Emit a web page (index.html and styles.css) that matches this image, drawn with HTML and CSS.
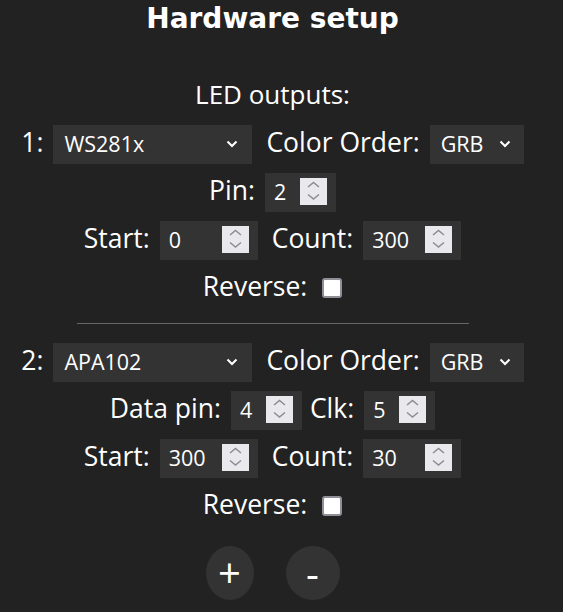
FILE: index.html
```html
<!DOCTYPE html>
<html>
<head>
<meta charset="utf-8">
<title>Hardware setup</title>
<link rel="stylesheet" href="styles.css">
</head>
<body>
<div class="page">
  <h2 class="title">Hardware setup</h2>
  <div class="subhead">LED outputs:</div>

  <div class="row">
    <span class="lbl">1:</span>
    <div class="select select-type"><span>WS281x</span><svg class="chev" width="12" height="8" viewBox="0 0 12 8"><path d="M1.5 1.5 L6 6 L10.5 1.5" fill="none" stroke="#fff" stroke-width="2"/></svg></div>
    <span class="lbl group">Color Order:</span>
    <div class="select select-order"><span>GRB</span><svg class="chev" width="12" height="8" viewBox="0 0 12 8"><path d="M1.5 1.5 L6 6 L10.5 1.5" fill="none" stroke="#fff" stroke-width="2"/></svg></div>
  </div>
  <div class="row">
    <span class="lbl">Pin:</span>
    <div class="num num-short"><span>2</span><svg class="spin" width="27" height="27" viewBox="0 0 27 27"><rect width="27" height="27" fill="#e9e9ed"/><path d="M8 9 L13.5 4.5 L19 9 M8 16.5 L13.5 21 L19 16.5" fill="none" stroke="#8c8c92" stroke-width="1.5"/></svg></div>
  </div>
  <div class="row">
    <span class="lbl">Start:</span>
    <div class="num num-long"><span>0</span><svg class="spin" width="27" height="27" viewBox="0 0 27 27"><rect width="27" height="27" fill="#e9e9ed"/><path d="M8 9 L13.5 4.5 L19 9 M8 16.5 L13.5 21 L19 16.5" fill="none" stroke="#8c8c92" stroke-width="1.5"/></svg></div>
    <span class="lbl group">Count:</span>
    <div class="num num-long"><span>300</span><svg class="spin" width="27" height="27" viewBox="0 0 27 27"><rect width="27" height="27" fill="#e9e9ed"/><path d="M8 9 L13.5 4.5 L19 9 M8 16.5 L13.5 21 L19 16.5" fill="none" stroke="#8c8c92" stroke-width="1.5"/></svg></div>
  </div>
  <div class="row">
    <span class="lbl">Reverse:</span>
    <div class="check"></div>
  </div>

  <hr class="sep">

  <div class="row">
    <span class="lbl">2:</span>
    <div class="select select-type"><span>APA102</span><svg class="chev" width="12" height="8" viewBox="0 0 12 8"><path d="M1.5 1.5 L6 6 L10.5 1.5" fill="none" stroke="#fff" stroke-width="2"/></svg></div>
    <span class="lbl group">Color Order:</span>
    <div class="select select-order"><span>GRB</span><svg class="chev" width="12" height="8" viewBox="0 0 12 8"><path d="M1.5 1.5 L6 6 L10.5 1.5" fill="none" stroke="#fff" stroke-width="2"/></svg></div>
  </div>
  <div class="row">
    <span class="lbl">Data pin:</span>
    <div class="num num-short"><span>4</span><svg class="spin" width="27" height="27" viewBox="0 0 27 27"><rect width="27" height="27" fill="#e9e9ed"/><path d="M8 9 L13.5 4.5 L19 9 M8 16.5 L13.5 21 L19 16.5" fill="none" stroke="#8c8c92" stroke-width="1.5"/></svg></div>
    <span class="lbl group-tight">Clk:</span>
    <div class="num num-short"><span>5</span><svg class="spin" width="27" height="27" viewBox="0 0 27 27"><rect width="27" height="27" fill="#e9e9ed"/><path d="M8 9 L13.5 4.5 L19 9 M8 16.5 L13.5 21 L19 16.5" fill="none" stroke="#8c8c92" stroke-width="1.5"/></svg></div>
  </div>
  <div class="row">
    <span class="lbl">Start:</span>
    <div class="num num-long"><span>300</span><svg class="spin" width="27" height="27" viewBox="0 0 27 27"><rect width="27" height="27" fill="#e9e9ed"/><path d="M8 9 L13.5 4.5 L19 9 M8 16.5 L13.5 21 L19 16.5" fill="none" stroke="#8c8c92" stroke-width="1.5"/></svg></div>
    <span class="lbl group">Count:</span>
    <div class="num num-long"><span>30</span><svg class="spin" width="27" height="27" viewBox="0 0 27 27"><rect width="27" height="27" fill="#e9e9ed"/><path d="M8 9 L13.5 4.5 L19 9 M8 16.5 L13.5 21 L19 16.5" fill="none" stroke="#8c8c92" stroke-width="1.5"/></svg></div>
  </div>
  <div class="row">
    <span class="lbl">Reverse:</span>
    <div class="check"></div>
  </div>

  <div class="btns">
    <div class="btn btn-plus">+</div>
    <div class="btn btn-minus">-</div>
  </div>
</div>
</body>
</html>
```
FILE: styles.css
```css
html, body {
  margin: 0;
  padding: 0;
  background: #222;
  color: #fff;
  font-family: "Open Sans", "Noto Sans", sans-serif;
}

.page {
  width: 545px;
  height: 612px;
  overflow: hidden;
}

.title {
  margin: 0;
  padding-top: 1px;
  font-family: "DejaVu Sans", Verdana, sans-serif;
  font-weight: bold;
  font-size: 28px;
  line-height: 36px;
  text-align: center;
}

.subhead {
  margin-top: 35px;
  font-size: 26px;
  line-height: 44px;
  padding-bottom: 4px;
  text-align: center;
}

.row {
  display: flex;
  justify-content: center;
  align-items: center;
  height: 48px;
}

.lbl {
  font-size: 26.5px;
  line-height: 26px;
  padding-bottom: 4px;
  margin-right: 10px;
  white-space: nowrap;
}

.group {
  margin-left: 14px;
}

.group-tight {
  margin-left: 8px;
}

.select,
.num {
  box-sizing: border-box;
  height: 39px;
  padding-bottom: 1px;
  background: #333;
  display: flex;
  align-items: center;
  justify-content: space-between;
  font-size: 21.5px;
  white-space: nowrap;
}

.select-type {
  width: 199px;
  padding-left: 11px;
  padding-right: 14px;
}

.select-order {
  width: 94px;
  padding-left: 11px;
  padding-right: 13px;
}

.chev {
  display: block;
  flex: none;
}

.num {
  padding-left: 9px;
  padding-right: 9px;
}

.num-short {
  width: 71px;
}

.num-long {
  width: 98px;
}

.spin {
  display: block;
  flex: none;
}

.check {
  box-sizing: border-box;
  width: 20px;
  height: 20px;
  margin-left: 5px;
  background: #fff;
  border: 2px solid #8f8f98;
  border-radius: 3px;
}

.sep {
  width: 392px;
  height: 0;
  margin: 11px auto 14px;
  border: 0;
  border-top: 1px solid #666;
}

.btns {
  display: flex;
  justify-content: center;
  gap: 32px;
  margin-top: 16px;
}

.btn {
  height: 54px;
  border-radius: 50%;
  background: #333;
  display: flex;
  align-items: center;
  justify-content: center;
  font-size: 40px;
  line-height: 40px;
}

.btn-plus {
  width: 48px;
}

.btn-minus {
  width: 54px;
}
```
